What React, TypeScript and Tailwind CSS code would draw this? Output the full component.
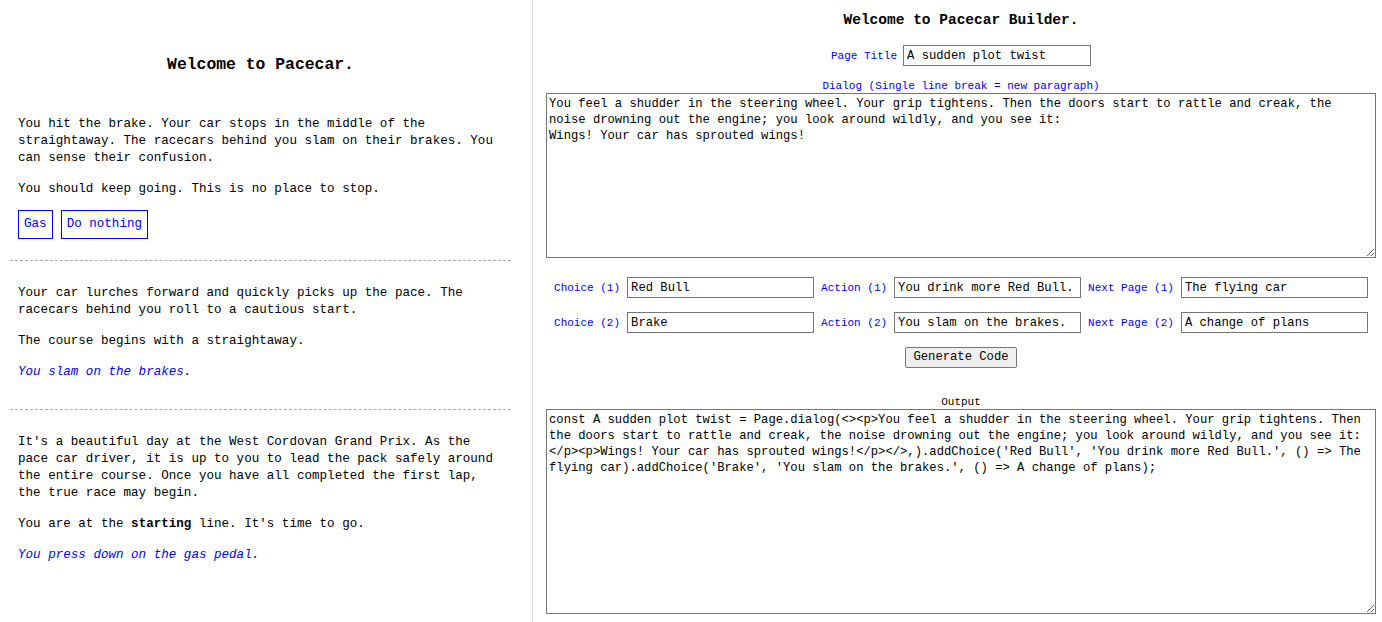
import * as React from 'react'

const dialogText = `You feel a shudder in the steering wheel. Your grip tightens. Then the doors start to rattle and creak, the noise drowning out the engine; you look around wildly, and you see it:
Wings! Your car has sprouted wings!`

const outputText = `const A sudden plot twist = Page.dialog(<><p>You feel a shudder in the steering wheel. Your grip tightens. Then the doors start to rattle and creak, the noise drowning out the engine; you look around wildly, and you see it:</p><p>Wings! Your car has sprouted wings!</p></>,).addChoice('Red Bull', 'You drink more Red Bull.', () => The flying car).addChoice('Brake', 'You slam on the brakes.', () => A change of plans);`

const StoryPanel: React.FC<{}> = ({ }) => {
  return (
    <div className="w-[533px] shrink-0 border-r border-[#dddddd] min-h-screen text-[12.57px] leading-[17px] text-black">
      <div className="ml-[10px] w-[501px]">
        <h1 className="pt-[55px] text-[16.4px] leading-[20px] font-bold text-center">Welcome to Pacecar.</h1>

        <section className="pt-[40.5px] pb-[21px] border-b border-dashed border-[#aaaaaa]">
          <div className="pl-2 w-[488px]">
            <p className="mb-[14px]">You hit the brake. Your car stops in the middle of the straightaway. The racecars behind you slam on their brakes. You can sense their confusion.</p>
            <p className="mb-[12.5px]">You should keep going. This is no place to stop.</p>
            <div className="flex gap-[8px]">
              <button className="border border-[#0000ff] text-[#0000ff] px-[5px] py-[5px] leading-[17px]">Gas</button>
              <button className="border border-[#0000ff] text-[#0000ff] px-[5px] py-[5px] leading-[17px]">Do nothing</button>
            </div>
          </div>
        </section>

        <section className="pt-[23.5px] pb-[28.5px] border-b border-dashed border-[#aaaaaa]">
          <div className="pl-2 w-[488px]">
            <p className="mb-[14px]">Your car lurches forward and quickly picks up the pace. The racecars behind you roll to a cautious start.</p>
            <p className="mb-[14px]">The course begins with a straightaway.</p>
            <p className="italic text-[#0000ff]">You slam on the brakes.</p>
          </div>
        </section>

        <section className="pt-[23.5px]">
          <div className="pl-2 w-[488px]">
            <p className="mb-[14px]">It's a beautiful day at the West Cordovan Grand Prix. As the pace car driver, it is up to you to lead the pack safely around the entire course. Once you have all completed the first lap, the true race may begin.</p>
            <p className="mb-[14px]">You are at the <b>starting</b> line. It's time to go.</p>
            <p className="italic text-[#0000ff]">You press down on the gas pedal.</p>
          </div>
        </section>
      </div>
    </div>
  )
}

const Field: React.FC<{ label: string, value: string }> = ({ label, value }) => {
  return (
    <div className="flex items-center gap-[7px]">
      <span className="text-[11px] leading-[14px] text-[#0000ff]">{label}</span>
      <input
        readOnly
        value={value}
        className="w-[187px] h-[21px] border border-[#767676] px-[3px] text-[12.2px] text-black outline-none"
      />
    </div>
  )
}

const BuilderPanel: React.FC<{}> = ({ }) => {
  return (
    <div className="flex-1 pl-[13px] pr-[6px] text-[12.2px] text-black">
      <div className="w-[830px] flex flex-col items-center">
        <h1 className="pt-[11px] text-[14.5px] leading-[18px] font-bold">Welcome to Pacecar Builder.</h1>

        <div className="mt-[16px] flex items-center gap-[6px]">
          <span className="text-[11px] leading-[14px] text-[#0000ff]">Page Title</span>
          <input
            readOnly
            value="A sudden plot twist"
            className="w-[188px] h-[21px] border border-[#767676] px-[3px] text-[12.2px] outline-none"
          />
        </div>

        <label className="mt-[13px] text-[11px] leading-[14px] text-[#0000ff]">Dialog (Single line break = new paragraph)</label>
        <textarea
          readOnly
          value={dialogText}
          className="w-[830px] h-[165px] border border-[#767676] p-[2px] text-[12.2px] leading-[16px] outline-none"
        />

        <div className="mt-[19px] flex flex-col gap-[14px]">
          <div className="flex gap-[7px]">
            <Field label="Choice (1)" value="Red Bull" />
            <Field label="Action (1)" value="You drink more Red Bull." />
            <Field label="Next Page (1)" value="The flying car" />
          </div>
          <div className="flex gap-[7px]">
            <Field label="Choice (2)" value="Brake" />
            <Field label="Action (2)" value="You slam on the brakes." />
            <Field label="Next Page (2)" value="A change of plans" />
          </div>
        </div>

        <button className="mt-[14px] h-[21px] px-[7px] border border-[#767676] rounded-[2px] bg-[#efefef] text-[12.2px] leading-[15px]">
          Generate Code
        </button>

        <label className="mt-[27px] text-[11px] leading-[14px] text-black">Output</label>
        <textarea
          readOnly
          value={outputText}
          className="w-[830px] h-[205px] border border-[#767676] p-[2px] text-[12.2px] leading-[16px] outline-none"
        />
      </div>
    </div>
  )
}

export default function App() {
  return (
    <div className="flex w-screen min-h-screen bg-white font-['Liberation_Mono',monospace]">
      <StoryPanel />
      <BuilderPanel />
    </div>
  )
}
